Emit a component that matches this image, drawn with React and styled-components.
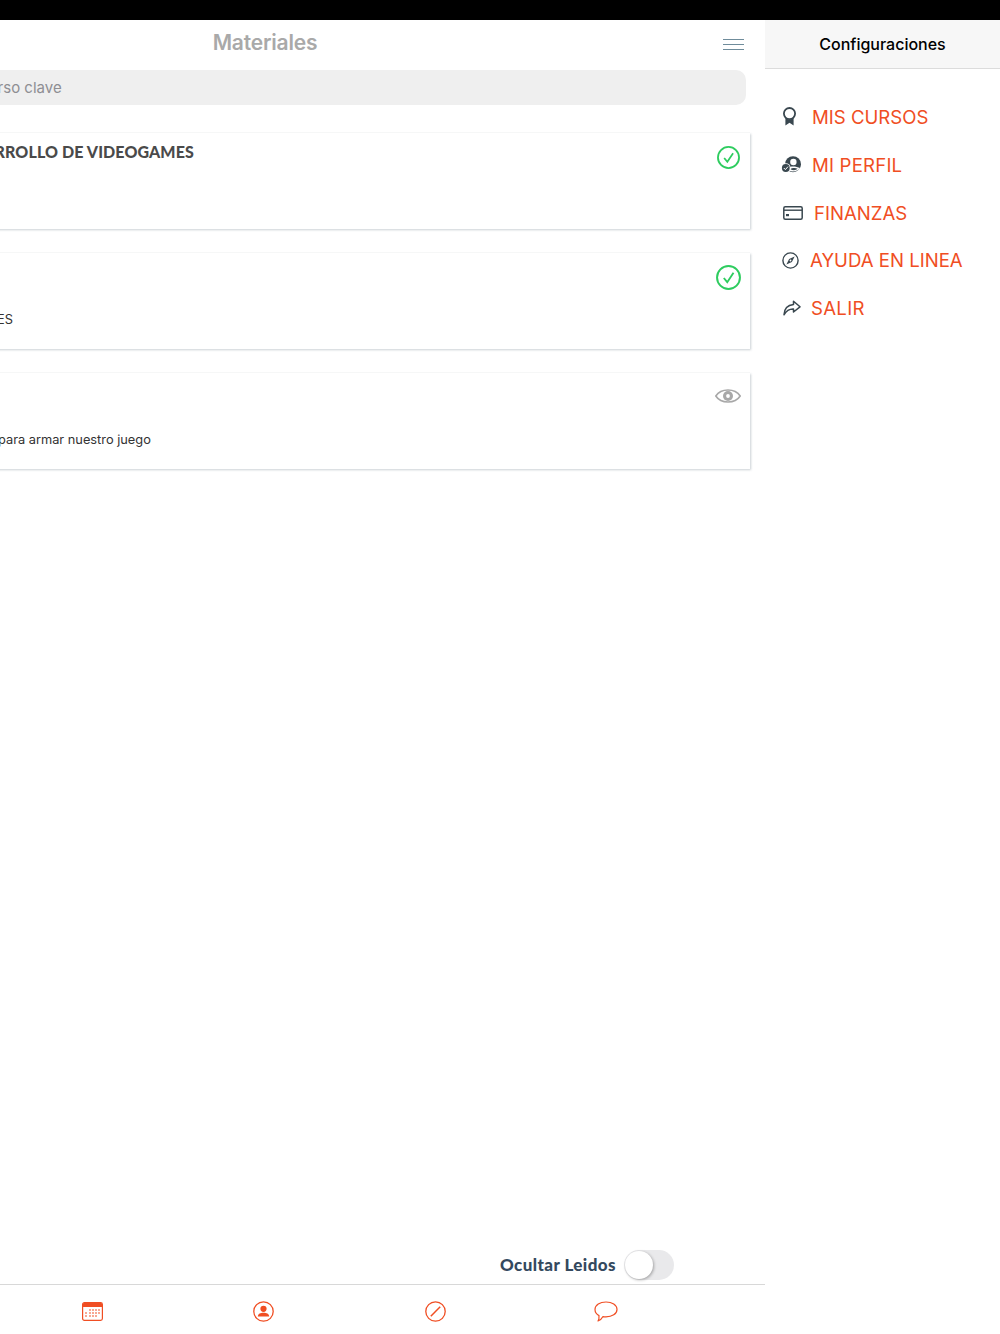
import React from "react";
import styled, { createGlobalStyle } from "styled-components";

const orange = "#f04e23";
const slate = "#34495e";
const iconSlate = "#39474f";

const GlobalStyle = createGlobalStyle`
  html, body {
    margin: 0;
    padding: 0;
    background: #fff;
  }
`;

const Screen = styled.div`
  width: 1000px;
  height: 1334px;
  display: flex;
  flex-direction: column;
  overflow: hidden;
  background: #fff;
`;

const StatusBar = styled.div`
  height: 20px;
  flex: none;
  background: #000;
`;

const Body = styled.div`
  flex: 1;
  display: flex;
  min-height: 0;
`;

// the page is pushed left by the open drawer, so its left part is cut off
const Page = styled.main`
  width: 1000px;
  flex: none;
  margin-left: -235px;
  display: flex;
  flex-direction: column;
`;

const TopBar = styled.header`
  height: 50px;
  flex: none;
  display: flex;
  align-items: center;
  justify-content: center;
  position: relative;
`;

const Title = styled.h1`
  margin: 0 0 5px;
  font: 600 21px "Inter", sans-serif;
  letter-spacing: -0.2px;
  color: #a9a9a9;
`;

const MenuButton = styled.div`
  position: absolute;
  top: 19px;
  right: 21px;
  width: 21px;
  height: 9px;
  border-top: 1px solid #6f8c9b;
  border-bottom: 1px solid #6f8c9b;

  &::after {
    content: "";
    display: block;
    height: 1px;
    margin-top: 4px;
    background: #6f8c9b;
  }
`;

const Search = styled.div`
  height: 35px;
  flex: none;
  margin: 0 19px 0 10px;
  padding: 0 0 1px 53px;
  box-sizing: border-box;
  border-radius: 10px;
  background: #efefef;
  display: flex;
  align-items: center;
  font: 400 15px "Inter", sans-serif;
  color: #8e8e93;
`;

const CardList = styled.div`
  display: flex;
  flex-direction: column;
  gap: 24px;
  margin: 28px 15px 0 10px;
`;

const Card = styled.article`
  height: 96px;
  position: relative;
  background: #fff;
  box-shadow: 1px 1px 2px rgba(140, 155, 165, 0.45), 0 -1px 0 #fafafa;
  display: flex;
  flex-direction: column;
`;

const CardTitle = styled.h2`
  margin: 9px 0 0 ${(p) => p.$left}px;
  font: 900 16px "Lato", sans-serif;
  letter-spacing: 0.1px;
  color: #4a4a4a;
  white-space: nowrap;
`;

const CardText = styled.p`
  margin: 59px 0 0 ${(p) => p.$left}px;
  font: 400 12.8px/16px "Inter", sans-serif;
  color: #333;
  white-space: nowrap;
`;

const CardStatus = styled.div`
  position: absolute;
  top: ${(p) => p.$top}px;
  right: 9px;
  width: 26px;
  height: 26px;
  display: flex;
  align-items: center;
  justify-content: center;
`;

const Spacer = styled.div`
  flex: 1;
`;

const ToggleRow = styled.div`
  height: 30px;
  flex: none;
  display: flex;
  align-items: center;
  justify-content: flex-end;
  gap: 8px;
  padding-right: 91px;
  margin-bottom: 4px;
`;

const ToggleLabel = styled.span`
  font: 900 17px "Lato", sans-serif;
  letter-spacing: 0.42px;
  margin-bottom: 2px;
  color: ${slate};
`;

const Toggle = styled.div`
  width: 50px;
  height: 30px;
  border-radius: 15px;
  background: #e9e9eb;
  padding: 1px;
  box-sizing: border-box;
`;

const ToggleKnob = styled.div`
  width: 28px;
  height: 28px;
  border-radius: 50%;
  background: #fff;
  box-shadow: 1px 1px 3px rgba(0, 0, 0, 0.3);
`;

const TabBar = styled.nav`
  height: 50px;
  flex: none;
  margin-left: 235px;
  width: 765px;
  box-sizing: border-box;
  padding: 4px 73px 0 7px;
  border-top: 1px solid #d8d8d8;
  display: grid;
  grid-template-columns: repeat(4, 1fr);
  align-items: center;
  justify-items: center;
`;

const Drawer = styled.aside`
  flex: 1;
  display: flex;
  flex-direction: column;
  background: #fff;
`;

const DrawerHeader = styled.div`
  height: 48px;
  flex: none;
  border-bottom: 1px solid #dcdcdc;
  background: #f7f7f7;
  display: flex;
  align-items: center;
  justify-content: center;
  font: 500 16px "Inter", sans-serif;
  color: #000;
`;

const DrawerMenu = styled.ul`
  list-style: none;
  margin: 0;
  padding: 24px 0 0;
`;

const DrawerItem = styled.li`
  height: 47.85px;
  display: flex;
  align-items: center;
  padding-left: ${(p) => p.$iconLeft}px;
  position: relative;
`;

const DrawerLabel = styled.span`
  position: absolute;
  left: ${(p) => p.$left}px;
  font: 400 18.6px "Inter", sans-serif;
  letter-spacing: ${(p) => p.$spacing || 0}px;
  color: ${orange};
`;

const RibbonIcon = () => (
  <svg width="15" height="19" viewBox="0 0 15 19" fill="none">
    <circle cx="7.5" cy="6.6" r="5.6" stroke={iconSlate} strokeWidth="1.8" />
    <path d="M3.4 11 V18.6 L7.5 15.8 L11.6 18.6 V11 L7.5 13 Z" fill={iconSlate} />
  </svg>
);

const ProfileIcon = () => (
  <svg width="20" height="17" viewBox="0 0 20 17" fill="none">
    <circle cx="12" cy="8.2" r="8" fill={iconSlate} />
    <circle cx="12.4" cy="6" r="3.2" fill="#fff" />
    <path d="M6.5 12.2 C9 9.8 15 10 19 12 C17 15.2 12 16.4 8.5 14.8 Z" fill="#fff" />
    <path d="M9.5 13.2 C11 11.8 14.5 11.8 16.6 12.8 C15 14.4 12 14.8 9.5 13.2 Z" fill={iconSlate} />
    <circle cx="4.8" cy="12" r="4.8" fill="#fff" />
    <circle cx="4.8" cy="12" r="3.9" fill={iconSlate} />
    <path d="M2.8 12 L4.4 13.6 L7 10.6" stroke="#fff" strokeWidth="1" />
  </svg>
);

const CreditCardIcon = () => (
  <svg width="20" height="14" viewBox="0 0 20 14" fill="none">
    <rect x="0.8" y="0.8" width="18.4" height="12.4" rx="1.5" stroke={iconSlate} strokeWidth="1.5" />
    <path d="M1 4.2 H19" stroke={iconSlate} strokeWidth="1.4" />
    <rect x="3" y="8" width="3" height="2.2" fill={iconSlate} />
  </svg>
);

const CompassIcon = () => (
  <svg width="17" height="17" viewBox="0 0 17 17" fill="none">
    <circle cx="8.5" cy="8.5" r="7.6" stroke={iconSlate} strokeWidth="1.4" />
    <path d="M12.6 4.4 L9.9 9.9 L4.4 12.6 L7.1 7.1 Z" fill={iconSlate} />
    <circle cx="8.5" cy="8.5" r="0.9" fill="#fff" />
  </svg>
);

const ShareIcon = () => (
  <svg width="18" height="16" viewBox="0 0 18 16" fill="none">
    <path
      d="M10.5 1.2 L17 6.8 L10.5 12 V9 C6.5 8.8 3.5 10.5 1 14.8 C1.2 9 4.5 5 10.5 4.4 Z"
      stroke={iconSlate}
      strokeWidth="1.5"
      strokeLinejoin="round"
    />
  </svg>
);

const CheckIcon = ({ size }) => (
  <svg width={size} height={size} viewBox="0 0 24 24" fill="none">
    <circle cx="12" cy="12" r="11" stroke="#2ecc5f" strokeWidth="1.9" />
    <path d="M7.5 12.5 L10.8 16.5 L16.8 7.5" stroke="#2ecc5f" strokeWidth="1.8" />
  </svg>
);

const EyeIcon = () => (
  <svg width="26" height="18" viewBox="0 0 26 18" fill="none">
    <path d="M0.8 9 C6 1 20 1 25.2 9 C20 17 6 17 0.8 9 Z" stroke="#a8a8a8" strokeWidth="1.6" />
    <circle cx="13" cy="9" r="5" fill="#a8a8a8" />
    <circle cx="13" cy="9" r="1.9" fill="#fff" />
  </svg>
);

const CalendarIcon = () => (
  <svg width="21" height="19" viewBox="0 0 21 19" fill="none">
    <rect x="0.6" y="0.6" width="19.8" height="17.8" rx="1.8" stroke={orange} strokeWidth="1.2" />
    <path d="M1 1.5 Q1 1 2 1 H19 Q20 1 20 1.5 V5 H1 Z" fill={orange} />
    <g fill={orange}>
      {[
        [8, 8], [11, 8], [14, 8], [17, 8],
        [4, 11], [8, 11], [11, 11], [14, 11], [17, 11],
        [4, 14], [8, 14], [11, 14], [14, 14],
      ].map(([x, y]) => (
        <rect key={`${x}-${y}`} x={x - 0.7} y={y - 0.7} width="1.4" height="1.4" />
      ))}
    </g>
  </svg>
);

const UserIcon = () => (
  <svg width="21" height="21" viewBox="0 0 21 21" fill="none">
    <circle cx="10.5" cy="10.5" r="9.7" stroke={orange} strokeWidth="1.3" />
    <circle cx="10.5" cy="7.8" r="3.1" fill={orange} />
    <path d="M4.8 15.5 C5 12.6 7.5 11.8 10.5 11.8 C13.5 11.8 16 12.6 16.2 15.5 Z" fill={orange} />
  </svg>
);

const NeedleIcon = () => (
  <svg width="21" height="21" viewBox="0 0 21 21" fill="none">
    <circle cx="10.5" cy="10.5" r="9.7" stroke={orange} strokeWidth="1.3" />
    <path d="M5.8 15.2 L15.2 5.8" stroke={orange} strokeWidth="1.5" />
  </svg>
);

const ChatIcon = () => (
  <svg width="24" height="21" viewBox="0 0 24 21" fill="none">
    <path
      d="M12 1 C18 1 23 4 23 8.5 C23 13 18 15.8 12 15.8 C11 15.8 10 15.8 9 15.6 C8 17.6 6 19.3 4 20 C4.8 18.8 5.2 17 5 14.6 C2.4 13.2 1 11 1 8.5 C1 4 6 1 12 1 Z"
      stroke={orange}
      strokeWidth="1.2"
      strokeLinejoin="round"
    />
  </svg>
);

const menu = [
  { label: "MIS CURSOS", left: 47, iconLeft: 17, icon: <RibbonIcon /> },
  { label: "MI PERFIL", left: 47, spacing: 0.2, iconLeft: 16, icon: <ProfileIcon /> },
  { label: "FINANZAS", left: 49, iconLeft: 18, icon: <CreditCardIcon /> },
  { label: "AYUDA EN LINEA", left: 45, iconLeft: 17, icon: <CompassIcon /> },
  { label: "SALIR", left: 46, spacing: 0.3, iconLeft: 18, icon: <ShareIcon /> },
];

const App = () => {
  return (
    <Screen>
      <GlobalStyle />
      <StatusBar />
      <Body>
        <Page>
          <TopBar>
            <Title>Materiales</Title>
            <MenuButton />
          </TopBar>
          <Search>Buscar por palabra o curso clave</Search>
          <CardList>
            <Card>
              <CardTitle $left={178}>DESARROLLO DE VIDEOGAMES</CardTitle>
              <CardStatus $top={11}>
                <CheckIcon size={23} />
              </CardStatus>
            </Card>
            <Card>
              <CardText $left={222}>ES</CardText>
              <CardStatus $top={11}>
                <CheckIcon size={25} />
              </CardStatus>
            </Card>
            <Card>
              <CardText $left={223}>para armar nuestro juego</CardText>
              <CardStatus $top={10}>
                <EyeIcon />
              </CardStatus>
            </Card>
          </CardList>
          <Spacer />
          <ToggleRow>
            <ToggleLabel>Ocultar Leidos</ToggleLabel>
            <Toggle>
              <ToggleKnob />
            </Toggle>
          </ToggleRow>
          <TabBar>
            <CalendarIcon />
            <UserIcon />
            <NeedleIcon />
            <ChatIcon />
          </TabBar>
        </Page>
        <Drawer>
          <DrawerHeader>Configuraciones</DrawerHeader>
          <DrawerMenu>
            {menu.map((item) => (
              <DrawerItem key={item.label} $iconLeft={item.iconLeft}>
                {item.icon}
                <DrawerLabel $left={item.left} $spacing={item.spacing}>
                  {item.label}
                </DrawerLabel>
              </DrawerItem>
            ))}
          </DrawerMenu>
        </Drawer>
      </Body>
    </Screen>
  );
};

export default App;
